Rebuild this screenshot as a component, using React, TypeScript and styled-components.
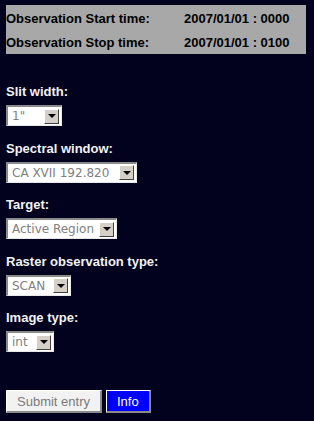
import React from "react";
import styled, { createGlobalStyle } from "styled-components";

const GlobalStyle = createGlobalStyle`
  html, body {
    margin: 0;
    padding: 0;
    background: #02021f;
  }
  body {
    font-family: "Liberation Sans", Arial, sans-serif;
  }
`;

const Page = styled.div`
  padding: 5px 6px;
  display: flex;
  flex-direction: column;
`;

const TimeBox = styled.div`
  background: #a8a8a8;
  width: 300px;
  height: 49px;
  box-sizing: border-box;
  padding: 1px 0 0 0;
  display: grid;
  grid-template-columns: 178px 1fr;
  grid-auto-rows: 24px;
  align-items: center;
  font-weight: bold;
  font-size: 13px;
  color: #000;
`;

const Field = styled.div<{ $first?: boolean }>`
  display: flex;
  flex-direction: column;
  align-items: flex-start;
  margin-top: ${({ $first }) => ($first ? "30px" : "14.6px")};
`;

const Label = styled.div`
  color: #f2f2f2;
  font-weight: bold;
  font-size: 13px;
  line-height: 15px;
  margin-bottom: 6px;
`;

const SelectBox = styled.div<{ $w: number }>`
  width: ${({ $w }) => $w}px;
  height: 21px;
  box-sizing: border-box;
  background: #fff;
  border-top: 2px solid #8a8a8a;
  border-left: 2px solid #8a8a8a;
  border-right: 1px solid #e8e8e8;
  border-bottom: 1px solid #e8e8e8;
  display: flex;
  align-items: center;
  justify-content: space-between;
`;

const SelectValue = styled.span`
  font-family: "DejaVu Sans", Verdana, sans-serif;
  font-size: 12px;
  color: #808080;
  padding-left: 4px;
  white-space: nowrap;
`;

const ArrowButton = styled.span`
  width: 15px;
  height: 15px;
  margin-right: 2px;
  box-sizing: border-box;
  background: #d4d0c8;
  border-top: 1px solid #fff;
  border-left: 1px solid #fff;
  border-right: 1px solid #404040;
  border-bottom: 1px solid #404040;
  display: flex;
  align-items: center;
  justify-content: center;
`;

const Buttons = styled.div`
  display: flex;
  gap: 4px;
  margin-top: 38px;
`;

const Button = styled.button<{ $info?: boolean }>`
  height: 23px;
  box-sizing: border-box;
  padding: 0 10px;
  font-family: "Liberation Sans", Arial, sans-serif;
  font-size: 13px;
  background: ${({ $info }) => ($info ? "#0000ff" : "#f2f2f2")};
  color: ${({ $info }) => ($info ? "#fff" : "#7a7a7a")};
  border-top: 1px solid #fff;
  border-left: 1px solid #fff;
  border-right: 2px solid #8a8a8a;
  border-bottom: 2px solid #8a8a8a;
`;

const Select = ({ value, width }: { value: string; width: number }) => (
  <SelectBox $w={width}>
    <SelectValue>{value}</SelectValue>
    <ArrowButton>
      <svg width="8" height="4" viewBox="0 0 8 4">
        <path d="M0 0h8L4 4z" fill="#000" />
      </svg>
    </ArrowButton>
  </SelectBox>
);

const fields = [
  { label: "Slit width:", value: '1"', width: 56 },
  { label: "Spectral window:", value: "CA XVII 192.820", width: 131 },
  { label: "Target:", value: "Active Region", width: 111 },
  { label: "Raster observation type:", value: "SCAN", width: 65 },
  { label: "Image type:", value: "int", width: 48 },
];

export default function App() {
  return (
    <>
      <GlobalStyle />
      <Page>
        <TimeBox>
          <span>Observation Start time:</span>
          <span>2007/01/01 : 0000</span>
          <span>Observation Stop time:</span>
          <span>2007/01/01 : 0100</span>
        </TimeBox>
        {fields.map((f, i) => (
          <Field key={f.label} $first={i === 0}>
            <Label>{f.label}</Label>
            <Select value={f.value} width={f.width} />
          </Field>
        ))}
        <Buttons>
          <Button>Submit entry</Button>
          <Button $info>Info</Button>
        </Buttons>
      </Page>
    </>
  );
}
